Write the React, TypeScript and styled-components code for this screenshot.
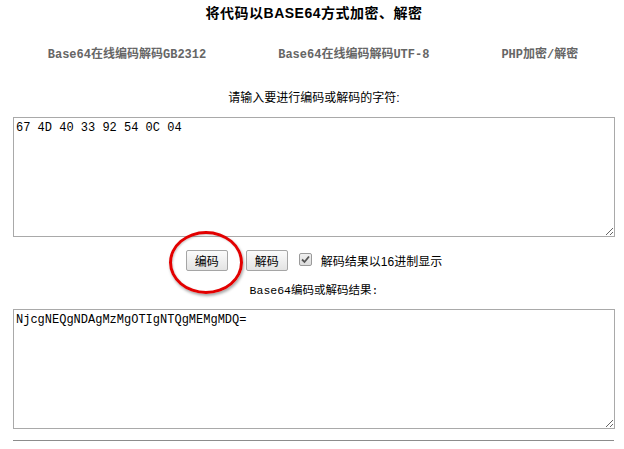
import React from 'react';
import styled, { createGlobalStyle } from 'styled-components';

const GlobalStyle = createGlobalStyle`
  body {
    margin: 0;
    background: #fff;
    font-family: "Liberation Sans", "Noto Sans CJK SC", sans-serif;
    color: #000;
  }
`;

const Page = styled.div`
  width: 602px;
  padding-left: 13px;
`;

const Title = styled.h1`
  margin: 0;
  padding-top: 5px;
  font-size: 14px;
  line-height: 16px;
  font-weight: bold;
  text-align: center;
  letter-spacing: 0.5px;
`;

const Nav = styled.nav`
  display: flex;
  justify-content: center;
  gap: 72px;
  margin-top: 26px;
  padding-right: 2px;
`;

const NavLink = styled.a`
  font-family: "Liberation Mono", "Noto Sans CJK SC", monospace;
  font-size: 12px;
  line-height: 16px;
  font-weight: bold;
  color: #666;
  text-decoration: none;
`;

const Label = styled.div<{ $top: number }>`
  margin-top: ${p => p.$top}px;
  font-size: 12px;
  line-height: 16px;
  text-align: center;
`;

const MonoLabel = styled(Label)`
  font-family: "Liberation Mono", "Noto Sans CJK SC", monospace;
  font-size: 11.5px;
`;

const Box = styled.textarea<{ $top: number }>`
  display: block;
  box-sizing: border-box;
  width: 602px;
  height: 120px;
  margin: ${p => p.$top}px 0 0;
  padding: 3px 2px;
  border: 1px solid #a9a9a9;
  font-family: "Liberation Mono", monospace;
  font-size: 12px;
  line-height: 15px;
  color: #000;
  outline: none;
`;

const Controls = styled.div`
  display: flex;
  justify-content: center;
  align-items: center;
  height: 21px;
  margin-top: 13px;
`;

const Marked = styled.span`
  position: relative;
  display: inline-flex;
`;

const Ring = styled.span`
  position: absolute;
  left: -17px;
  top: -19px;
  width: 68px;
  height: 57px;
  border: 3px solid #e20000;
  border-radius: 50%;
  box-shadow: 1px 2px 3px rgba(0, 0, 0, 0.35), inset 1px 1px 2px rgba(0, 0, 0, 0.2);
  pointer-events: none;
`;

const Button = styled.button<{ $gap?: number }>`
  box-sizing: border-box;
  height: 21px;
  padding: 0 8px;
  margin-left: ${p => p.$gap ?? 0}px;
  border: 1px solid #a5a5a5;
  border-radius: 2px;
  background: linear-gradient(#fbfbfb, #e3e3e3);
  font-family: "Noto Sans CJK SC", sans-serif;
  font-size: 12px;
  line-height: 19px;
  color: #000;
`;

const Check = styled.label`
  display: inline-flex;
  align-items: center;
  margin-left: 11px;
  font-size: 12px;
`;

const CheckBox = styled.span`
  box-sizing: border-box;
  display: inline-flex;
  align-items: center;
  justify-content: center;
  width: 13px;
  height: 13px;
  margin-right: 9px;
  margin-top: -3px;
  border: 1px solid #9a9a9a;
  border-radius: 2px;
  background: linear-gradient(#f0f0f0, #dcdcdc);
`;

const Rule = styled.hr`
  width: 601px;
  margin: 11px 0 0;
  border: none;
  border-top: 1px solid #8c8c8c;
`;

const App = () => {
  return (
    <>
      <GlobalStyle />
      <Page>
        <Title>将代码以BASE64方式加密、解密</Title>
        <Nav>
          <NavLink href="#">Base64在线编码解码GB2312</NavLink>
          <NavLink href="#">Base64在线编码解码UTF-8</NavLink>
          <NavLink href="#">PHP加密/解密</NavLink>
        </Nav>
        <Label $top={27}>请输入要进行编码或解码的字符:</Label>
        <Box $top={11} defaultValue="67 4D 40 33 92 54 0C 04" />
        <Controls>
          <Marked>
            <Button>编码</Button>
            <Ring />
          </Marked>
          <Button $gap={18}>解码</Button>
          <Check>
            <CheckBox>
              <svg width="9" height="9" viewBox="0 0 9 9">
                <path d="M1 4.5 L3.5 7 L8 1.5" fill="none" stroke="#555" strokeWidth="1.8" />
              </svg>
            </CheckBox>
            解码结果以16进制显示
          </Check>
        </Controls>
        <MonoLabel $top={12}>Base64编码或解码结果:</MonoLabel>
        <Box $top={10} defaultValue="NjcgNEQgNDAgMzMgOTIgNTQgMEMgMDQ=" />
        <Rule />
      </Page>
    </>
  );
};

export default App;
